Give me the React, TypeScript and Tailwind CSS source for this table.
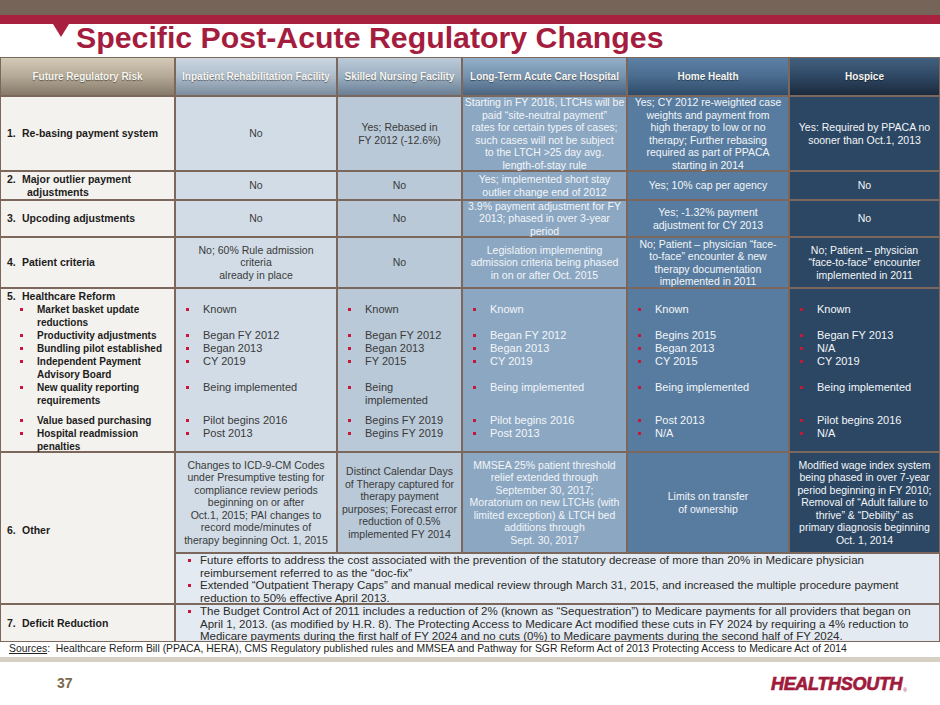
import React from 'react';
import clsx from 'clsx';

const COLS = [
  'bg-[#f4f2ee] text-[#1c1c1c]',
  'bg-[#d1dce6] text-[#3a3a3a]',
  'bg-[#b9c9d8] text-[#3a3a3a]',
  'bg-[#8ba7c2] text-[#f3f6f9]',
  'bg-[#587c9f] text-[#f3f6f9]',
  'bg-[#2c4763] text-[#f3f6f9]',
];

const HEADS = [
  { label: 'Future Regulatory Risk', cls: 'from-[#d4cab8] via-[#b4a995] to-[#857a6a]' },
  { label: 'Inpatient Rehabilitation Facility', cls: 'from-[#cbd6e1] via-[#aebccb] to-[#7b8d9f]' },
  { label: 'Skilled Nursing Facility', cls: 'from-[#bccad8] via-[#9bafc1] to-[#6b7f95]' },
  { label: 'Long-Term Acute Care Hospital', cls: 'from-[#93aec8] via-[#7592af] to-[#4b6480]' },
  { label: 'Home Health', cls: 'from-[#5d81a5] via-[#4a6c8f] to-[#2f4b69]' },
  { label: 'Hospice', cls: 'from-[#42607f] via-[#2e4864] to-[#1b2a3c]' },
];

// slot heights for the healthcare reform row, so every column lines up with the labels
const SLOTS = ['h-[26px]', 'h-[13px]', 'h-[13px]', 'h-[26px]', 'h-[33px]', 'h-[13px]', 'h-[26px]'];

const REFORM: string[][] = [
  ['Market basket update\nreductions', 'Productivity adjustments', 'Bundling pilot established', 'Independent Payment\nAdvisory Board', 'New quality reporting\nrequirements', 'Value based purchasing', 'Hospital readmission\npenalties'],
  ['Known', 'Began FY 2012', 'Began 2013', 'CY 2019', 'Being implemented', 'Pilot begins 2016', 'Post 2013'],
  ['Known', 'Began FY 2012', 'Began 2013', 'FY 2015', 'Being\nimplemented', 'Begins FY 2019', 'Begins FY 2019'],
  ['Known', 'Began FY 2012', 'Began 2013', 'CY 2019', 'Being implemented', 'Pilot begins 2016', 'Post 2013'],
  ['Known', 'Begins 2015', 'Began 2013', 'CY 2015', 'Being implemented', 'Post 2013', 'N/A'],
  ['Known', 'Began FY 2013', 'N/A', 'CY 2019', 'Being implemented', 'Pilot begins 2016', 'N/A'],
];

const Lines = ({ text }: { text: string }) => (
  <>
    {text.split('\n').map((l, i) => (
      <React.Fragment key={i}>
        {i > 0 && <br />}
        {l}
      </React.Fragment>
    ))}
  </>
);

const Cell = ({ col, text, className }: { col: number; text: string; className?: string }) => (
  <div
    className={clsx(
      COLS[col],
      'flex items-center justify-center text-center whitespace-nowrap text-[10.5px] leading-[12.5px]',
      className,
    )}
  >
    <div>
      <Lines text={text} />
    </div>
  </div>
);

const Label = ({ num, text, className }: { num: string; text: string; className?: string }) => {
  const [first, ...rest] = text.split('\n');
  return (
    <div className={clsx(COLS[0], 'flex items-center pl-[6px] font-bold text-[10.5px] leading-[12.5px] whitespace-nowrap', className)}>
      <div>
        <div className="flex">
          <span className="w-[15px]">{num}</span>
          <span>{first}</span>
        </div>
        {rest.map((r) => (
          <div key={r} className="pl-[20px]">{r}</div>
        ))}
      </div>
    </div>
  );
};

const Dot = ({ className }: { className?: string }) => (
  <span className={clsx('inline-block w-[3px] h-[3px] shrink-0 bg-[#c8163a]', className)} />
);

const ReformCell = ({ col }: { col: number }) => (
  <div className={clsx(COLS[col], 'whitespace-nowrap leading-[13px]', col === 0 ? 'pt-[1px] font-bold text-[10px]' : 'pt-[14px] text-[11px]')}>
    {col === 0 && (
      <div className="h-[13px] flex pl-[6px] text-[10.5px]">
        <span className="w-[15px]">5.</span>
        <span>Healthcare Reform</span>
      </div>
    )}
    {REFORM[col].map((item, i) => (
      <div key={i} className={clsx(SLOTS[i], 'flex items-start')}>
        <Dot className={col === 0 ? 'ml-[19px] mt-[5px]' : 'ml-[10px] mt-[5px]'} />
        <span className="ml-[14px]">
          <Lines text={item} />
        </span>
      </div>
    ))}
  </div>
);

const Notes = ({ items, className }: { items: string[]; className?: string }) => (
  <div className={clsx('col-span-5 bg-[#e4eaf1] text-[#2a2a2a] text-[11.5px] leading-[12.6px] whitespace-nowrap overflow-hidden', className)}>
    {items.map((it, i) => (
      <div key={i} className="flex items-start">
        <Dot className="ml-[12px] mt-[5px]" />
        <span className="ml-[9px]">
          <Lines text={it} />
        </span>
      </div>
    ))}
  </div>
);

export default function App() {
  return (
    <div className="w-[940px] h-[705px] bg-white overflow-hidden font-['Liberation_Sans',Arial,sans-serif]">
      <div className="h-[15px] bg-[#766459]" />
      <div className="h-[9px] bg-[#a8213f]" />
      <div className="relative h-[33px]">
        <svg className="absolute left-[53px] top-0" width="16" height="13" viewBox="0 0 16 13">
          <polygon points="0,0 16,0 8,13" fill="#a8213f" />
        </svg>
        <h1 className="pl-[76px] text-[30.3px] leading-[28px] font-bold text-[#a51d3e] whitespace-nowrap">
          Specific Post-Acute Regulatory Changes
        </h1>
      </div>

      <div className="grid grid-cols-[173px_160px_123px_163px_160px_149px] grid-rows-[37px_73px_27px_35px_49px_162px_99px_49px_36px] gap-[2px] p-px bg-[#7b675b]">
        {HEADS.map((h) => (
          <div
            key={h.label}
            className={clsx(
              'flex items-center justify-center bg-linear-to-b text-[10px] font-bold text-[#f7f5f0] whitespace-nowrap [text-shadow:0_1px_1px_rgba(0,0,0,0.45)]',
              h.cls,
            )}
          >
            {h.label}
          </div>
        ))}

        <Label num="1." text="Re-basing payment system" />
        <Cell col={1} text="No" />
        <Cell col={2} text={'Yes; Rebased in\nFY 2012 (-12.6%)'} />
        <Cell col={3} text={'Starting in FY 2016, LTCHs will be\npaid “site-neutral payment”\nrates for  certain types of cases;\nsuch cases will not be subject\nto the LTCH >25 day avg.\nlength-of-stay rule'} />
        <Cell col={4} text={'Yes; CY 2012 re-weighted case\nweights and payment from\nhigh therapy to low or no\ntherapy; Further rebasing\nrequired as part of PPACA\nstarting in 2014'} />
        <Cell col={5} text={'Yes: Required by PPACA no\nsooner than Oct.1, 2013'} />

        <Label num="2." text={'Major outlier payment\nadjustments'} />
        <Cell col={1} text="No" />
        <Cell col={2} text="No" />
        <Cell col={3} text={'Yes; implemented short stay\noutlier change end of 2012'} />
        <Cell col={4} text="Yes; 10% cap per agency" />
        <Cell col={5} text="No" />

        <Label num="3." text="Upcoding adjustments" />
        <Cell col={1} text="No" />
        <Cell col={2} text="No" />
        <Cell col={3} text={'3.9% payment adjustment for FY\n2013; phased in over 3-year\nperiod'} />
        <Cell col={4} text={'Yes; -1.32% payment\nadjustment for CY 2013'} />
        <Cell col={5} text="No" />

        <Label num="4." text="Patient criteria" />
        <Cell col={1} text={'No; 60% Rule admission\ncriteria\nalready in place'} />
        <Cell col={2} text="No" />
        <Cell col={3} text={'Legislation implementing\nadmission criteria being phased\nin on or after Oct.  2015'} />
        <Cell col={4} text={'No; Patient – physician “face-\nto-face” encounter & new\ntherapy documentation\nimplemented in 2011'} />
        <Cell col={5} text={'No; Patient – physician\n“face-to-face” encounter\nimplemented in 2011'} />

        {[0, 1, 2, 3, 4, 5].map((c) => (
          <ReformCell key={c} col={c} />
        ))}

        <Label num="6." text="Other" className="row-span-2 pt-[4px]" />
        <Cell col={1} text={'Changes to ICD-9-CM Codes\nunder Presumptive testing  for\ncompliance review periods\nbeginning on or after\nOct.1, 2015; PAI changes to\nrecord mode/minutes of\ntherapy beginning Oct. 1, 2015'} />
        <Cell col={2} text={'Distinct Calendar Days\nof Therapy captured for\ntherapy payment\npurposes; Forecast error\nreduction of 0.5%\nimplemented FY 2014'} />
        <Cell col={3} text={'MMSEA 25% patient threshold\nrelief extended through\nSeptember 30, 2017;\nMoratorium on new LTCHs (with\nlimited exception) & LTCH bed\nadditions through\nSept. 30, 2017'} />
        <Cell col={4} text={'Limits on transfer\nof ownership'} />
        <Cell col={5} text={'Modified wage index system\nbeing phased in over 7-year\nperiod beginning in FY 2010;\nRemoval of “Adult failure to\nthrive” & “Debility”  as\nprimary diagnosis beginning\nOct. 1, 2014'} />
        <Notes
          items={[
            'Future efforts to address the cost associated with the prevention of the statutory decrease of more than 20% in Medicare physician\nreimbursement referred to as the “doc-fix”',
            'Extended “Outpatient Therapy Caps” and manual medical review through March 31, 2015, and increased the multiple procedure payment\nreduction to 50% effective April 2013.',
          ]}
        />

        <Label num="7." text="Deficit Reduction" />
        <Notes
          items={[
            'The Budget Control Act of 2011 includes a reduction of 2% (known as “Sequestration”) to Medicare payments for all providers that began on\nApril 1, 2013. (as modified by H.R. 8). The Protecting Access to Medicare Act modified these cuts in FY 2024 by requiring a  4% reduction to\nMedicare payments during the first half of FY 2024 and no cuts (0%) to Medicare payments during the second half of FY 2024.',
          ]}
        />
      </div>

      <div className="h-[14px] pl-[9px] text-[10.4px] leading-[14px] text-[#222] whitespace-nowrap">
        <span className="underline">Sources</span>:{'\u00a0 '}Healthcare Reform Bill (PPACA, HERA), CMS Regulatory published rules and MMSEA and Pathway for SGR Reform Act of 2013 Protecting Access to Medicare Act of 2014
      </div>
      <div className="mt-px h-[5px] bg-[#d6d0c4]" />

      <div className="h-[43px] flex items-center justify-between pl-[57px] pr-[33px]">
        <span className="text-[14px] font-bold text-[#7a6a4e]">37</span>
        <span className="flex items-end">
          <span className="text-[18px] leading-[18px] font-bold italic text-[#a01a3c] tracking-[-0.3px] [-webkit-text-stroke:0.7px_#a01a3c]">
            HEALTHSOUTH
          </span>
          <span className="text-[5px] leading-[6px] text-[#a01a3c] ml-px">®</span>
        </span>
      </div>
    </div>
  );
}
